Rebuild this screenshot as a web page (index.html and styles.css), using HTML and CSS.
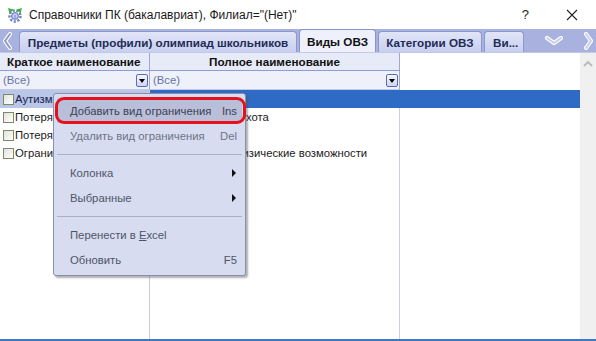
FILE: index.html
```html
<!DOCTYPE html>
<html lang="ru">
<head>
<meta charset="utf-8">
<title>Справочники ПК</title>
<link rel="stylesheet" href="styles.css">
</head>
<body>
<div class="window">
  <div class="titlebar">
    <svg class="appicon" width="16" height="16" viewBox="0 0 16 16">
      <circle cx="8" cy="9" r="5.5" fill="none" stroke="#6d7fbf" stroke-width="2.4" stroke-dasharray="2.2 1.6"/>
      <circle cx="8" cy="9" r="3.4" fill="#c6cff0" stroke="#5a6cb0" stroke-width="1"/>
      <path d="M1 1 L6.5 2.5 L2.5 6.5 Z" fill="#41b33d"/>
      <path d="M15 1 L9.5 2.5 L13.5 6.5 Z" fill="#41b33d"/>
      <path d="M8 8 L8 15" stroke="#8ea0d8" stroke-width="1.5"/>
    </svg>
    <span class="title">Справочники ПК (бакалавриат), Филиал="(Нет)"</span>
    <span class="help">?</span>
    <svg class="close" width="12" height="12" viewBox="0 0 12 12">
      <path d="M1 1 L11 11 M11 1 L1 11" stroke="#222" stroke-width="1.1"/>
    </svg>
  </div>

  <div class="tabstrip">
    <svg class="nav navleft" width="11" height="18" viewBox="0 0 11 18">
      <path d="M8 2 L3 9 L8 16" fill="none" stroke="#ffffff" stroke-width="4" stroke-linecap="round" stroke-linejoin="round"/>
      <path d="M8 2 L3 9 L8 16" fill="none" stroke="#8f9ac4" stroke-width="2" stroke-linecap="round" stroke-linejoin="round"/>
    </svg>
    <div class="tab t1">Предметы (профили) олимпиад школьников</div>
    <div class="tab active t2">Виды ОВЗ</div>
    <div class="tab t3">Категории ОВЗ</div>
    <div class="tab t4">Ви...</div>
    <div class="spacer"></div>
    <svg class="nav navdown" width="18" height="10" viewBox="0 0 18 10">
      <path d="M2 2 L9 7 L16 2" fill="none" stroke="#ffffff" stroke-width="4" stroke-linecap="round" stroke-linejoin="round"/>
      <path d="M2 2 L9 7 L16 2" fill="none" stroke="#c7cdea" stroke-width="2" stroke-linecap="round" stroke-linejoin="round"/>
    </svg>
    <svg class="nav navright" width="11" height="18" viewBox="0 0 11 18">
      <path d="M3 2 L8 9 L3 16" fill="none" stroke="#ffffff" stroke-width="4" stroke-linecap="round" stroke-linejoin="round"/>
      <path d="M3 2 L8 9 L3 16" fill="none" stroke="#c7cdea" stroke-width="2" stroke-linecap="round" stroke-linejoin="round"/>
    </svg>
  </div>

  <div class="content">
    <div class="grid">
      <div class="hcell c1">Краткое наименование</div>
      <div class="hcell c2 center">Полное наименование</div>
      <div class="blank"></div>

      <div class="fcell c1"><span>(Все)</span><span class="ddbtn"></span></div>
      <div class="fcell c2"><span>(Все)</span><span class="ddbtn"></span></div>
      <div class="blank"></div>

      <div class="cell c1 selsoft"><span class="chk"></span>Аутизм</div>
      <div class="cell c2 sel">Аутизм</div>
      <div class="cell sel"></div>

      <div class="cell c1"><span class="chk"></span>Потеря слуха</div>
      <div class="cell c2">Потеря слуха, глухота</div>
      <div class="cell"></div>

      <div class="cell c1"><span class="chk"></span>Потеря зрения</div>
      <div class="cell c2">Потеря зрения</div>
      <div class="cell"></div>

      <div class="cell c1"><span class="chk"></span>Ограниченные возможности</div>
      <div class="cell c2">Ограниченные физические возможности</div>
      <div class="cell"></div>

      <div class="cell c1"></div>
      <div class="cell c2"></div>
      <div class="cell"></div>
    </div>
    <div class="scrollbar">
      <svg width="12" height="8" viewBox="0 0 12 8">
        <path d="M2 6 L6 2 L10 6" fill="none" stroke="#bdbdbd" stroke-width="2"/>
      </svg>
    </div>
  </div>
  <div class="statusline"></div>

  <div class="menu">
    <div class="mi hot"><span>Добавить вид ограничения</span><span class="sc">Ins</span></div>
    <div class="mi dim"><span>Удалить вид ограничения</span><span class="sc">Del</span></div>
    <div class="sep"></div>
    <div class="mi"><span>Колонка</span><span class="arrow"></span></div>
    <div class="mi"><span>Выбранные</span><span class="arrow"></span></div>
    <div class="sep"></div>
    <div class="mi"><span>Перенести в <u>E</u>xcel</span></div>
    <div class="mi"><span>Обновить</span><span class="sc">F5</span></div>
  </div>
  <div class="annot"></div>
</div>
</body>
</html>
```

FILE: styles.css
```css
* { box-sizing: border-box; }
html, body { margin: 0; padding: 0; background: #ffffff; }
body { font-family: "Liberation Sans", Arial, sans-serif; font-size: 11.3px; }

.window {
  position: relative;
  width: 596px;
  height: 341px;
  overflow: hidden;
  display: flex;
  flex-direction: column;
  background: #ffffff;
}

/* Title bar */
.titlebar {
  height: 29px;
  display: flex;
  align-items: center;
  padding-left: 7px;
  flex: none;
}
.appicon { flex: none; margin-right: 6px; }
.title { font-size: 12px; color: #1a1a1a; flex: 1; white-space: nowrap; }
.help { font-size: 13px; color: #222; margin-right: 37px; }
.close { margin-right: 18px; }

/* Tab strip */
.tabstrip {
  height: 24px;
  flex: none;
  background: #a9b2df;
  display: flex;
  align-items: flex-end;
  padding-left: 2px;
  border-bottom: 1px solid #c2c8e8;
}
.nav { flex: none; align-self: center; }
.navleft { margin-right: 6px; }
.navdown { margin-right: 20px; }
.navright { margin-right: 2px; }
.tab {
  height: 21px;
  flex: none;
  white-space: nowrap;
  padding: 0 8px;
  margin-right: 2px;
  display: flex;
  align-items: center;
  justify-content: center;
  font-weight: bold;
  font-size: 11.7px;
  color: #1f2c55;
  background: linear-gradient(#e1e5f7, #c8cfef);
  border: 1px solid #8c97cc;
  border-bottom: none;
  border-radius: 4px 4px 0 0;
}
.t1 { width: 278px; }
.t2 { width: 77px; }
.t3 { width: 104px; }
.t4 { width: 40px; justify-content: flex-start; }
.tab.active {
  height: 23px;
  color: #111;
  background: #eef0fb;
  border-color: #8893c8;
}
.spacer { flex: 1; }

/* Grid */
.content {
  flex: 1;
  display: flex;
  min-height: 0;
}
.grid {
  flex: 1;
  display: grid;
  grid-template-columns: 150px 250px 1fr;
  grid-template-rows: 18px 19px 18px 18px 18px 18px 1fr;
}
.c1, .c2 { border-right: 1px solid #c9cde8; }
.hcell {
  background: #e7eaf7;
  border-right: 1px solid #9ea7d6;
  border-bottom: 1px solid #8f9bd1;
  font-weight: bold;
  font-size: 11.7px;
  color: #111;
  padding-left: 7px;
  display: flex;
  align-items: center;
  white-space: nowrap;
  overflow: hidden;
}
.hcell.center { justify-content: center; padding-left: 0; }
.fcell {
  background: #eef0fa;
  border-right: 1px solid #9ea7d6;
  border-bottom: 1px solid #c3c9e7;
  display: flex;
  align-items: center;
  justify-content: space-between;
  padding: 0 1px 0 3px;
  color: #6673a6;
}
.ddbtn {
  width: 12px;
  height: 13px;
  border: 1px solid #5d6cae;
  border-radius: 2px;
  background: linear-gradient(#f4f6fd, #cfd6f1);
  position: relative;
}
.ddbtn::after {
  content: "";
  position: absolute;
  left: 2px;
  top: 4px;
  border-left: 3px solid transparent;
  border-right: 3px solid transparent;
  border-top: 4px solid #000;
}
.blank { background: #fff; }
.cell {
  display: flex;
  align-items: center;
  padding-left: 3px;
  white-space: nowrap;
  overflow: hidden;
  color: #1a1a1a;
}
.sel { background: #2f6bc4; color: #fff; border-right-color: #2f6bc4; }
.selsoft { background: #b9c6e8; color: #13214a; }
.chk {
  width: 11px;
  height: 11px;
  border: 1px solid #7b8a6b;
  background: linear-gradient(135deg, #e2e2dc, #ffffff);
  margin-right: 1px;
  flex: none;
}

.scrollbar {
  width: 16px;
  flex: none;
  background: #f0f0f0;
  display: flex;
  justify-content: center;
  padding-top: 7px;
}
.scrollbar svg { flex: none; }
.statusline {
  height: 2px;
  flex: none;
  background: #3f79c2;
}

/* Context menu (overlay) */
.menu {
  position: absolute;
  left: 53px;
  top: 93px;
  width: 193px;
  height: 183px;
  background: #d7dcf1;
  border: 1px solid #8a90aa;
  border-radius: 3px;
  box-shadow: 2px 2px 2px rgba(80, 80, 90, 0.45);
  padding: 4px 3px;
  display: flex;
  flex-direction: column;
  font-size: 11.3px;
}
.mi {
  height: 25px;
  flex: none;
  display: flex;
  align-items: center;
  justify-content: space-between;
  padding: 0 5px 0 13px;
  color: #4e5566;
  white-space: nowrap;
}
.mi.hot { background: #babfd9; color: #3b4252; border-radius: 2px; }
.mi.dim { color: #6d7486; }
.sc { color: inherit; }
.arrow {
  width: 0;
  height: 0;
  border-top: 4px solid transparent;
  border-bottom: 4px solid transparent;
  border-left: 4px solid #111;
  margin-right: 1px;
}
.sep {
  height: 12px;
  flex: none;
  position: relative;
}
.sep::after {
  content: "";
  position: absolute;
  left: 0;
  right: 0;
  top: 6px;
  border-top: 1px solid #a9b0cc;
}

.annot {
  position: absolute;
  left: 55px;
  top: 97px;
  width: 191px;
  height: 27px;
  border: 3px solid #e3121c;
  border-radius: 9px;
}
```
